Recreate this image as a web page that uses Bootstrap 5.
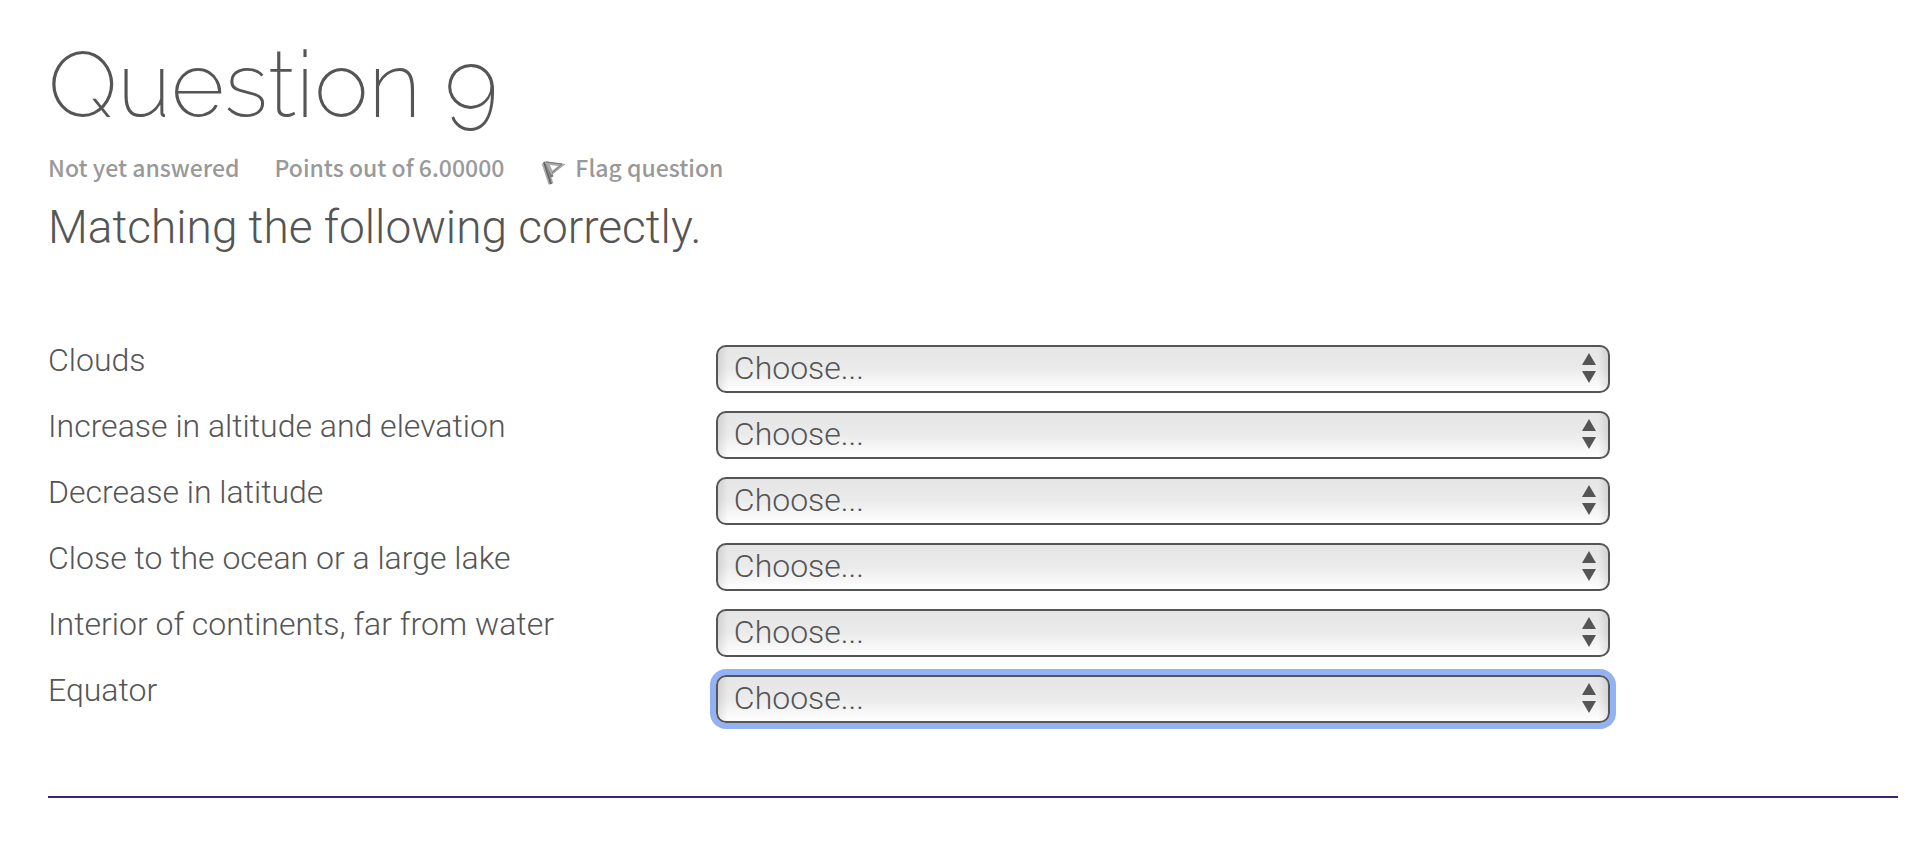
<!DOCTYPE html>
<html lang="en">
<head>
<meta charset="utf-8">
<meta name="viewport" content="width=device-width, initial-scale=1">
<title>Question 9</title>
<link href="https://cdn.jsdelivr.net/npm/bootstrap@5.3.0/dist/css/bootstrap.min.css" rel="stylesheet">
<style>
  body { color: #555; background: #fff; font-family: Roboto, "Liberation Sans", sans-serif; font-weight: 300; }
  .question { padding: 30px 26px 44px 48px; }
  .question-title { font-family: Raleway, Lato, sans-serif; font-weight: 200; font-size: 92px; line-height: 110px; color: #555; }
  .question-info { font-family: "Noto Sans CJK SC", sans-serif; font-weight: 500; font-size: 23px; line-height: 54px; color: #999; column-gap: 35px; }
  .question-info a { color: inherit; column-gap: 6px; }
  .question-info svg { margin-top: 12px; }
  .question-text { font-size: 46px; line-height: 66px; margin-bottom: 85px; }
  .answers { display: grid; grid-template-columns: 36.1% 48.35%; row-gap: 18px; }
  .answers label { font-size: 32px; line-height: 30px; }
  .answer-select {
    appearance: none; font-size: 32px; line-height: 42px; font-weight: 300; color: #555;
    height: 48px; padding: 0 48px 2px 16px; border: 2px solid #555; border-radius: 10px;
    background:
      url("data:image/svg+xml,%3Csvg xmlns='http://www.w3.org/2000/svg' width='14' height='30' viewBox='0 0 14 30'%3E%3Cpath fill='%23555' d='M7 0l7 12H0zM0 18h14L7 30z'/%3E%3C/svg%3E") no-repeat right 12px top 6px,
      linear-gradient(90deg, rgba(0,0,0,.09), transparent 10px, transparent calc(100% - 10px), rgba(0,0,0,.09)),
      linear-gradient(#e5e5e5, #ebebeb 50%, #f3f3f3 70%, #fff);
  }
  .answer-select:focus { outline: 0; box-shadow: 0 0 0 6px #92b2f4; }
  .question-rule { height: 2px; margin: 73px 0 0; border: 0; background: #3b2374; opacity: 1; }
</style>
</head>
<body>
<main class="question">
  <h1 class="question-title mb-0">Question 9</h1>
  <div class="question-info d-flex flex-wrap">
    <span>Not yet answered</span>
    <span>Points out of 6.00000</span>
    <a href="#" class="d-flex align-items-center text-decoration-none">
      <svg width="30" height="30" viewBox="0 0 30 30" fill="none" aria-hidden="true">
        <path d="M5 5L12 26" stroke="#aaa" stroke-width="5"/>
        <path d="M5 4l7 22" stroke="#666" stroke-width="2"/>
        <path d="M8 4l5 15" stroke="#777" stroke-width="3"/>
        <path d="M8 5l15 2-10 8z" stroke="#aaa" stroke-width="3"/>
        <path d="M7 4l16 2-10 9" stroke="#777" stroke-width="1"/>
      </svg>
      <span>Flag question</span>
    </a>
  </div>
  <p class="question-text">Matching the following correctly.</p>
  <form class="answers">
    <label for="a1">Clouds</label>
    <select id="a1" class="answer-select"><option>Choose...</option></select>
    <label for="a2">Increase in altitude and elevation</label>
    <select id="a2" class="answer-select"><option>Choose...</option></select>
    <label for="a3">Decrease in latitude</label>
    <select id="a3" class="answer-select"><option>Choose...</option></select>
    <label for="a4">Close to the ocean or a large lake</label>
    <select id="a4" class="answer-select"><option>Choose...</option></select>
    <label for="a5">Interior of continents, far from water</label>
    <select id="a5" class="answer-select"><option>Choose...</option></select>
    <label for="a6">Equator</label>
    <select id="a6" class="answer-select" autofocus><option>Choose...</option></select>
  </form>
  <hr class="question-rule">
</main>
<script src="https://cdn.jsdelivr.net/npm/bootstrap@5.3.0/dist/js/bootstrap.bundle.min.js"></script>
</body>
</html>
